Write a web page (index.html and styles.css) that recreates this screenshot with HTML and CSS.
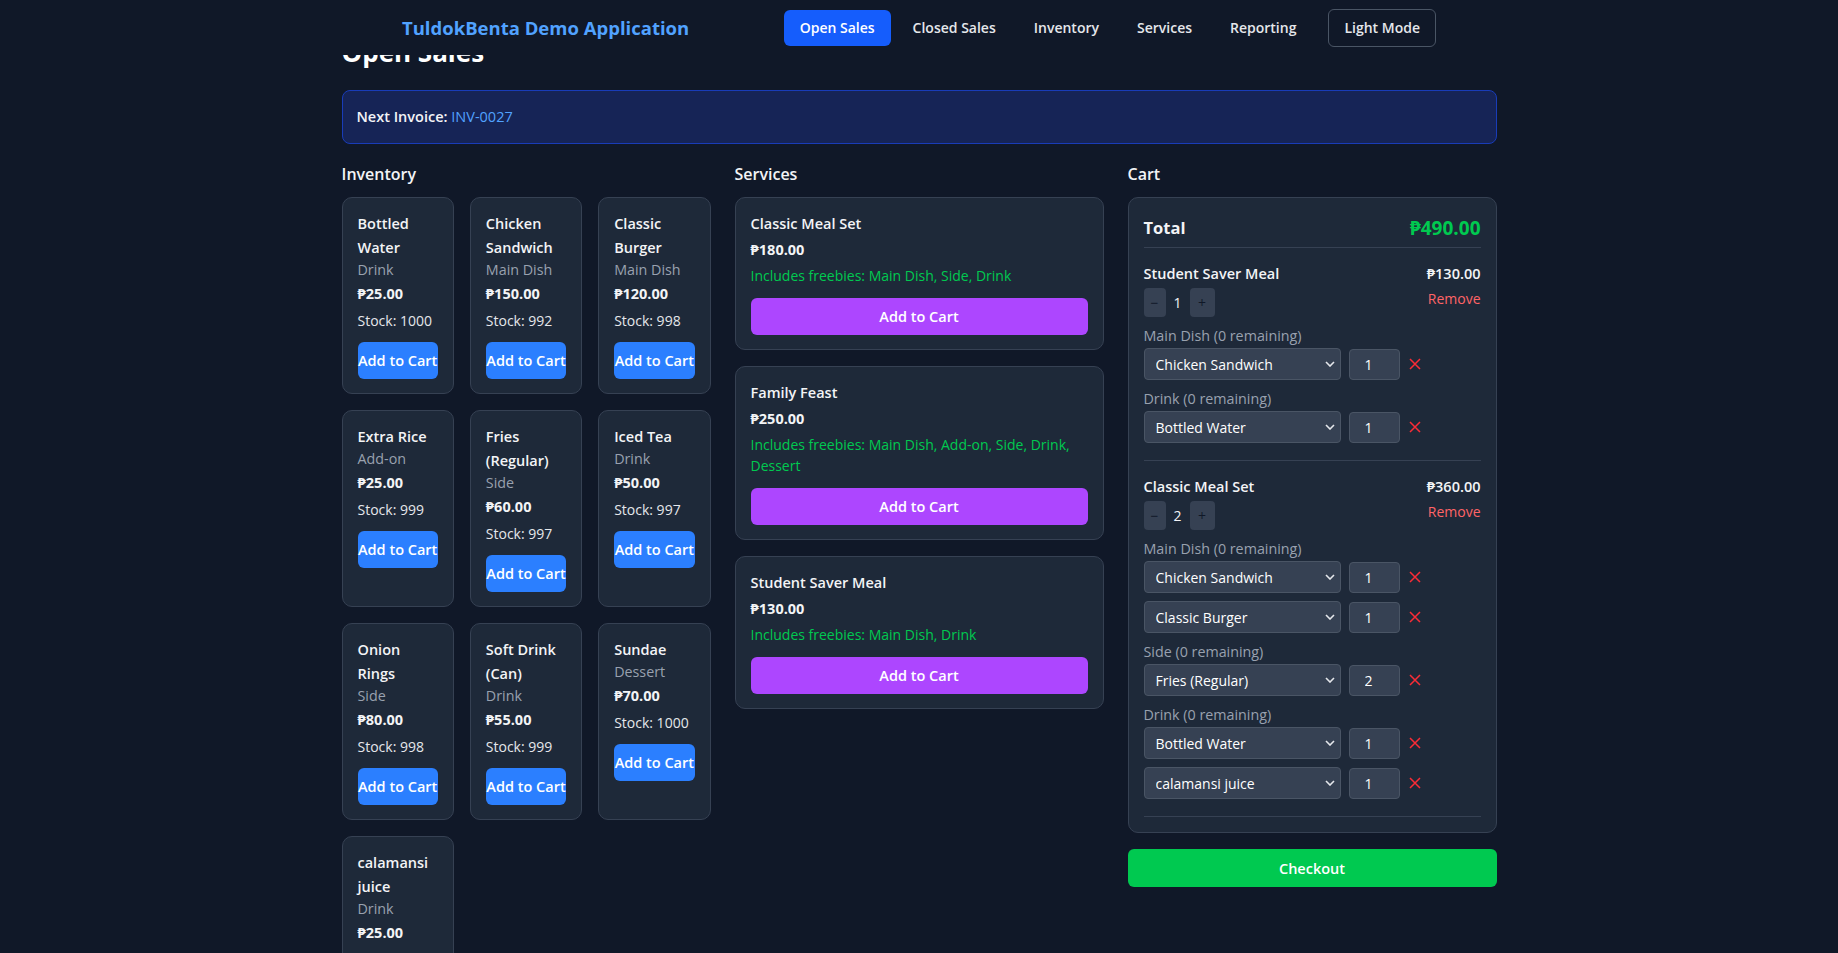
FILE: index.html
```html
<!DOCTYPE html>
<html lang="en">
<head>
<meta charset="utf-8">
<title>TuldokBenta Demo Application</title>
<link rel="stylesheet" href="styles.css">
</head>
<body>
<header class="topbar">
  <div class="topbar-inner">
    <div class="brand">TuldokBenta Demo Application</div>
    <nav class="nav">
      <a class="nav-link active">Open Sales</a>
      <a class="nav-link">Closed Sales</a>
      <a class="nav-link">Inventory</a>
      <a class="nav-link">Services</a>
      <a class="nav-link">Reporting</a>
      <button class="mode-btn">Light Mode</button>
    </nav>
  </div>
</header>

<main class="page">
  <h1 class="page-title">Open Sales</h1>
  <div class="invoice-bar"><span class="inv-label">Next Invoice:</span> <span class="inv-no">INV-0027</span></div>

  <div class="columns">
    <section class="col">
      <h2 class="col-title">Inventory</h2>
      <div class="inv-grid">
        <div class="card">
          <div class="item-name">Bottled Water</div>
          <div class="item-cat">Drink</div>
          <div class="item-price">₱25.00</div>
          <div class="item-stock">Stock: 1000</div>
          <button class="btn-add">Add to Cart</button>
        </div>
        <div class="card">
          <div class="item-name">Chicken Sandwich</div>
          <div class="item-cat">Main Dish</div>
          <div class="item-price">₱150.00</div>
          <div class="item-stock">Stock: 992</div>
          <button class="btn-add">Add to Cart</button>
        </div>
        <div class="card">
          <div class="item-name">Classic Burger</div>
          <div class="item-cat">Main Dish</div>
          <div class="item-price">₱120.00</div>
          <div class="item-stock">Stock: 998</div>
          <button class="btn-add">Add to Cart</button>
        </div>
        <div class="card">
          <div class="item-name">Extra Rice</div>
          <div class="item-cat">Add-on</div>
          <div class="item-price">₱25.00</div>
          <div class="item-stock">Stock: 999</div>
          <button class="btn-add">Add to Cart</button>
        </div>
        <div class="card">
          <div class="item-name">Fries (Regular)</div>
          <div class="item-cat">Side</div>
          <div class="item-price">₱60.00</div>
          <div class="item-stock">Stock: 997</div>
          <button class="btn-add">Add to Cart</button>
        </div>
        <div class="card">
          <div class="item-name">Iced Tea</div>
          <div class="item-cat">Drink</div>
          <div class="item-price">₱50.00</div>
          <div class="item-stock">Stock: 997</div>
          <button class="btn-add">Add to Cart</button>
        </div>
        <div class="card">
          <div class="item-name">Onion Rings</div>
          <div class="item-cat">Side</div>
          <div class="item-price">₱80.00</div>
          <div class="item-stock">Stock: 998</div>
          <button class="btn-add">Add to Cart</button>
        </div>
        <div class="card">
          <div class="item-name">Soft Drink (Can)</div>
          <div class="item-cat">Drink</div>
          <div class="item-price">₱55.00</div>
          <div class="item-stock">Stock: 999</div>
          <button class="btn-add">Add to Cart</button>
        </div>
        <div class="card">
          <div class="item-name">Sundae</div>
          <div class="item-cat">Dessert</div>
          <div class="item-price">₱70.00</div>
          <div class="item-stock">Stock: 1000</div>
          <button class="btn-add">Add to Cart</button>
        </div>
        <div class="card">
          <div class="item-name">calamansi juice</div>
          <div class="item-cat">Drink</div>
          <div class="item-price">₱25.00</div>
          <div class="item-stock">Stock: 100</div>
          <button class="btn-add">Add to Cart</button>
        </div>
      </div>
    </section>

    <section class="col">
      <h2 class="col-title">Services</h2>
      <div class="svc-list">
        <div class="card">
          <div class="item-name">Classic Meal Set</div>
          <div class="item-price">₱180.00</div>
          <div class="svc-free">Includes freebies: Main Dish, Side, Drink</div>
          <button class="btn-svc">Add to Cart</button>
        </div>
        <div class="card">
          <div class="item-name">Family Feast</div>
          <div class="item-price">₱250.00</div>
          <div class="svc-free">Includes freebies: Main Dish, Add-on, Side, Drink, Dessert</div>
          <button class="btn-svc">Add to Cart</button>
        </div>
        <div class="card">
          <div class="item-name">Student Saver Meal</div>
          <div class="item-price">₱130.00</div>
          <div class="svc-free">Includes freebies: Main Dish, Drink</div>
          <button class="btn-svc">Add to Cart</button>
        </div>
      </div>
    </section>

    <section class="col">
      <h2 class="col-title">Cart</h2>
      <div class="cart-card">
        <div class="cart-total">
          <span class="total-label">Total</span>
          <span class="total-amount">₱490.00</span>
        </div>

        <div class="cart-item">
          <div class="ci-head">
            <div>
              <div class="ci-name">Student Saver Meal</div>
              <div class="qty">
                <button class="qty-btn">−</button>
                <span class="qty-val">1</span>
                <button class="qty-btn plus">+</button>
              </div>
            </div>
            <div class="ci-right">
              <div class="ci-price">₱130.00</div>
              <div class="ci-remove">Remove</div>
            </div>
          </div>
          <div class="group">
            <div class="group-label">Main Dish (0 remaining)</div>
            <div class="pick-row">
              <div class="select-wrap"><select class="pick"><option>Chicken Sandwich</option></select><svg class="chev" viewBox="0 0 10 6" width="10" height="6"><path d="M1 1l4 4 4-4" fill="none" stroke="#e5e7eb" stroke-width="1.6"/></svg></div>
              <input class="qty-input" type="text" value="1">
              <svg class="rm-x" viewBox="0 0 12 12" width="12" height="12"><path d="M1 1l10 10M11 1L1 11" stroke="#fb2c36" stroke-width="1.5"/></svg>
            </div>
          </div>
          <div class="group">
            <div class="group-label">Drink (0 remaining)</div>
            <div class="pick-row">
              <div class="select-wrap"><select class="pick"><option>Bottled Water</option></select><svg class="chev" viewBox="0 0 10 6" width="10" height="6"><path d="M1 1l4 4 4-4" fill="none" stroke="#e5e7eb" stroke-width="1.6"/></svg></div>
              <input class="qty-input" type="text" value="1">
              <svg class="rm-x" viewBox="0 0 12 12" width="12" height="12"><path d="M1 1l10 10M11 1L1 11" stroke="#fb2c36" stroke-width="1.5"/></svg>
            </div>
          </div>
        </div>

        <div class="cart-item">
          <div class="ci-head">
            <div>
              <div class="ci-name">Classic Meal Set</div>
              <div class="qty">
                <button class="qty-btn">−</button>
                <span class="qty-val">2</span>
                <button class="qty-btn plus">+</button>
              </div>
            </div>
            <div class="ci-right">
              <div class="ci-price">₱360.00</div>
              <div class="ci-remove">Remove</div>
            </div>
          </div>
          <div class="group">
            <div class="group-label">Main Dish (0 remaining)</div>
            <div class="pick-row">
              <div class="select-wrap"><select class="pick"><option>Chicken Sandwich</option></select><svg class="chev" viewBox="0 0 10 6" width="10" height="6"><path d="M1 1l4 4 4-4" fill="none" stroke="#e5e7eb" stroke-width="1.6"/></svg></div>
              <input class="qty-input" type="text" value="1">
              <svg class="rm-x" viewBox="0 0 12 12" width="12" height="12"><path d="M1 1l10 10M11 1L1 11" stroke="#fb2c36" stroke-width="1.5"/></svg>
            </div>
            <div class="pick-row">
              <div class="select-wrap"><select class="pick"><option>Classic Burger</option></select><svg class="chev" viewBox="0 0 10 6" width="10" height="6"><path d="M1 1l4 4 4-4" fill="none" stroke="#e5e7eb" stroke-width="1.6"/></svg></div>
              <input class="qty-input" type="text" value="1">
              <svg class="rm-x" viewBox="0 0 12 12" width="12" height="12"><path d="M1 1l10 10M11 1L1 11" stroke="#fb2c36" stroke-width="1.5"/></svg>
            </div>
          </div>
          <div class="group">
            <div class="group-label">Side (0 remaining)</div>
            <div class="pick-row">
              <div class="select-wrap"><select class="pick"><option>Fries (Regular)</option></select><svg class="chev" viewBox="0 0 10 6" width="10" height="6"><path d="M1 1l4 4 4-4" fill="none" stroke="#e5e7eb" stroke-width="1.6"/></svg></div>
              <input class="qty-input" type="text" value="2">
              <svg class="rm-x" viewBox="0 0 12 12" width="12" height="12"><path d="M1 1l10 10M11 1L1 11" stroke="#fb2c36" stroke-width="1.5"/></svg>
            </div>
          </div>
          <div class="group">
            <div class="group-label">Drink (0 remaining)</div>
            <div class="pick-row">
              <div class="select-wrap"><select class="pick"><option>Bottled Water</option></select><svg class="chev" viewBox="0 0 10 6" width="10" height="6"><path d="M1 1l4 4 4-4" fill="none" stroke="#e5e7eb" stroke-width="1.6"/></svg></div>
              <input class="qty-input" type="text" value="1">
              <svg class="rm-x" viewBox="0 0 12 12" width="12" height="12"><path d="M1 1l10 10M11 1L1 11" stroke="#fb2c36" stroke-width="1.5"/></svg>
            </div>
            <div class="pick-row">
              <div class="select-wrap"><select class="pick"><option>calamansi juice</option></select><svg class="chev" viewBox="0 0 10 6" width="10" height="6"><path d="M1 1l4 4 4-4" fill="none" stroke="#e5e7eb" stroke-width="1.6"/></svg></div>
              <input class="qty-input" type="text" value="1">
              <svg class="rm-x" viewBox="0 0 12 12" width="12" height="12"><path d="M1 1l10 10M11 1L1 11" stroke="#fb2c36" stroke-width="1.5"/></svg>
            </div>
          </div>
        </div>
      </div>
      <button class="btn-checkout">Checkout</button>
    </section>
  </div>
</main>
</body>
</html>
```

FILE: styles.css
```css
* { box-sizing: border-box; }

body {
  margin: 0;
  background: #101828;
  color: #f3f4f6;
  font-family: "Open Sans", "Noto Sans", "DejaVu Sans", sans-serif;
}

button, input, select {
  font-family: inherit;
}

/* top bar */
.topbar {
  position: fixed;
  top: 0;
  left: 0;
  right: 0;
  height: 55px;
  background: #101828;
  z-index: 10;
}
.topbar-inner {
  width: 1034px;
  height: 100%;
  margin: 0 auto;
  display: flex;
  align-items: center;
  justify-content: space-between;
}
.brand {
  font-size: 18.5px;
  font-weight: 700;
  color: #51a2ff;
}
.nav {
  display: flex;
  align-items: center;
  gap: 6px;
}
.nav-link {
  padding: 8px 16px;
  font-size: 14px;
  line-height: 20px;
  font-weight: 600;
  color: #e5e7eb;
  border-radius: 6px;
}
.nav-link.active {
  background: #155dfc;
  color: #fff;
}
.mode-btn {
  margin-left: 10px;
  padding: 8px 15px;
  font-size: 14px;
  line-height: 20px;
  font-weight: 600;
  color: #e5e7eb;
  background: transparent;
  border: 1px solid #4a5565;
  border-radius: 6px;
}

/* page */
.page {
  width: 1155px;
  margin: 0 auto;
  padding-top: 34px;
  padding-bottom: 40px;
}
.page-title {
  margin: 0 0 20px;
  font-size: 26px;
  line-height: 36px;
  font-weight: 700;
  color: #fff;
}
.invoice-bar {
  border: 1px solid #193cb8;
  background: #162456;
  border-radius: 8px;
  padding: 16px 14px;
  font-size: 14.5px;
  line-height: 20px;
}
.inv-label {
  font-weight: 600;
  color: #f3f4f6;
}
.inv-no {
  color: #51a2ff;
}

.columns {
  margin-top: 16px;
  display: grid;
  grid-template-columns: repeat(3, minmax(0, 1fr));
  gap: 24px;
  align-items: start;
}
.col-title {
  margin: 0 0 9px;
  font-size: 16px;
  line-height: 28px;
  font-weight: 600;
  color: #f3f4f6;
}

/* inventory */
.inv-grid {
  display: grid;
  grid-template-columns: repeat(3, minmax(0, 1fr));
  gap: 16px;
}
.card {
  background: #1e2939;
  border: 1px solid #364153;
  border-radius: 10px;
  padding: 14px 15px;
}
.item-name {
  font-size: 14.5px;
  line-height: 24px;
  font-weight: 600;
  color: #f3f4f6;
}
.item-cat {
  font-size: 14.3px;
  line-height: 20px;
  color: #99a1af;
}
.item-price {
  margin-top: 2px;
  font-size: 14.5px;
  line-height: 24px;
  font-weight: 700;
  color: #f3f4f6;
}
.item-stock {
  margin-top: 5px;
  font-size: 14px;
  line-height: 20px;
  color: #e5e7eb;
}
.btn-add {
  display: block;
  margin-top: 11px;
  width: 100%;
  height: 37px;
  padding: 0;
  border: 0;
  border-radius: 6px;
  background: #2b7fff;
  color: #fff;
  font-size: 14.5px;
  font-weight: 600;
  white-space: nowrap;
}

/* services */
.svc-list {
  display: flex;
  flex-direction: column;
  gap: 16px;
}
.svc-free {
  margin-top: 3px;
  font-size: 14px;
  line-height: 21.7px;
  color: #00c950;
}
.btn-svc {
  display: block;
  margin-top: 11px;
  width: 100%;
  height: 37px;
  border: 0;
  border-radius: 6px;
  background: #ad46ff;
  color: #fff;
  font-size: 14.5px;
  font-weight: 600;
}

/* cart */
.cart-card {
  background: #1e2939;
  border: 1px solid #364153;
  border-radius: 10px;
  padding: 16px 15px 15px;
}
.cart-total {
  display: flex;
  justify-content: space-between;
  align-items: center;
  padding-bottom: 5px;
  border-bottom: 1px solid #364153;
  line-height: 28px;
}
.total-label {
  font-size: 16.5px;
  font-weight: 700;
  color: #f3f4f6;
}
.total-amount {
  font-size: 19px;
  font-weight: 700;
  color: #00c950;
}
.cart-item {
  padding: 14px 0 17px;
  border-bottom: 1px solid #364153;
}
.ci-head {
  display: flex;
  justify-content: space-between;
}
.ci-name, .ci-price {
  font-size: 14.5px;
  line-height: 24px;
  font-weight: 600;
  color: #f3f4f6;
}
.ci-right {
  text-align: right;
}
.ci-remove {
  margin-top: 3px;
  font-size: 14px;
  line-height: 20px;
  color: #ff6467;
}
.qty {
  margin-top: 2px;
  display: flex;
  align-items: center;
  gap: 8px;
}
.qty-btn {
  width: 22px;
  height: 29px;
  padding: 0;
  border: 0;
  border-radius: 4px;
  background: #364153;
  color: #101828;
  font-size: 14px;
}
.qty-btn.plus {
  width: 25px;
}
.qty-val {
  font-size: 14px;
  color: #f3f4f6;
}
.group {
  margin-top: 9px;
}
.group-label {
  margin-bottom: 2px;
  font-size: 14.3px;
  line-height: 20px;
  color: #99a1af;
}
.pick-row {
  display: flex;
  align-items: center;
  gap: 8px;
}
.pick-row + .pick-row {
  margin-top: 8px;
}
.select-wrap {
  position: relative;
  width: 197px;
}
.pick {
  display: block;
  width: 100%;
  height: 32px;
  padding: 0 26px 0 11px;
  -webkit-appearance: none;
  appearance: none;
  background: #364153;
  border: 1px solid #4a5565;
  border-radius: 4px;
  color: #fff;
  font-size: 14px;
}
.chev {
  position: absolute;
  right: 6px;
  top: 13px;
  pointer-events: none;
}
.qty-input {
  width: 51px;
  height: 31px;
  padding: 0 0 0 15px;
  background: #364153;
  border: 1px solid #4a5565;
  border-radius: 4px;
  color: #fff;
  font-size: 14px;
}
.rm-x {
  margin-left: 1px;
  flex: none;
}
.btn-checkout {
  display: block;
  margin-top: 16px;
  width: 100%;
  height: 38px;
  border: 0;
  border-radius: 6px;
  background: #00c950;
  color: #fff;
  font-size: 14.5px;
  font-weight: 600;
}
```
